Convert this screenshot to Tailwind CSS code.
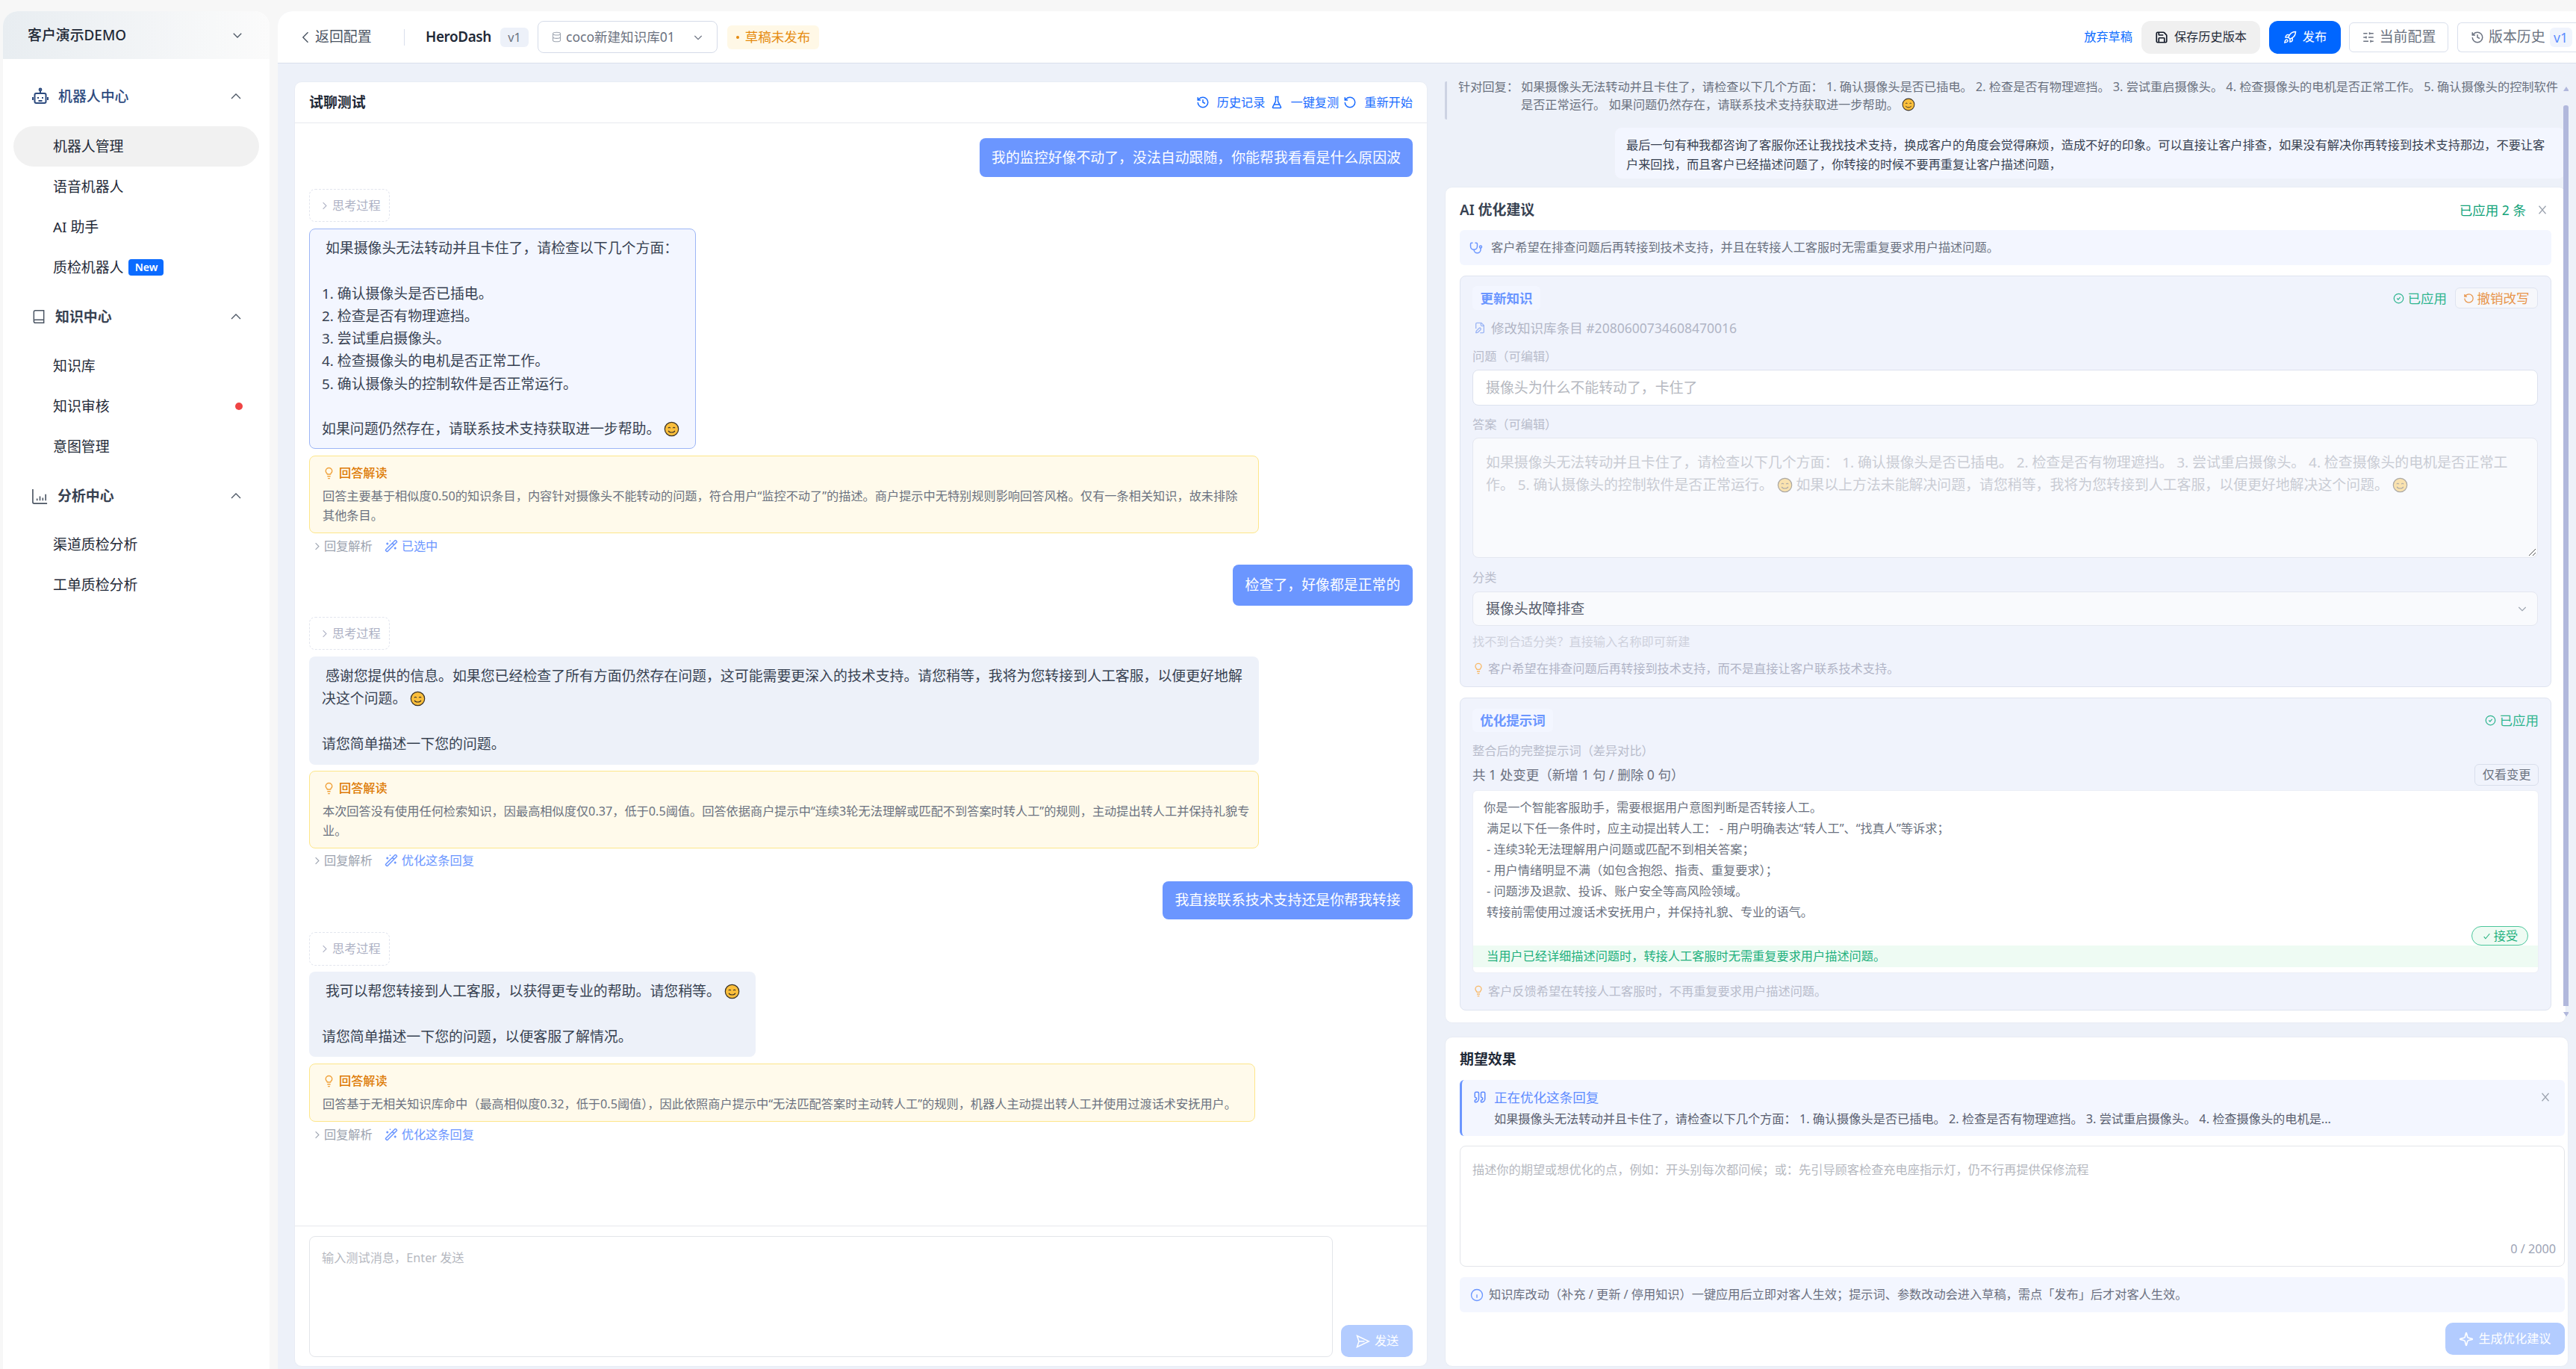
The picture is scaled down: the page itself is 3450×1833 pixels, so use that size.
<!DOCTYPE html>
<html lang="zh-CN">
<head>
    <meta charset="UTF-8">
    <title>HeroDash 调优</title>
    <script src="https://cdn.jsdelivr.net/npm/@tailwindcss/browser@4"></script>
</head>
<body class="bg-[#f7f7f7] w-[3450px] h-[1833px] overflow-hidden font-['Noto_Sans','Noto_Sans_CJK_SC',sans-serif] text-[#1f2937]">

<!-- icon sprite -->
<svg class="hidden">
    <defs>
        <symbol id="i-down" viewBox="0 0 24 24" fill="none" stroke="currentColor" stroke-width="1.7"><path d="m5 9 7 7 7-7"/></symbol>
        <symbol id="i-up" viewBox="0 0 24 24" fill="none" stroke="currentColor" stroke-width="1.7"><path d="m4 16 8-8 8 8"/></symbol>
        <symbol id="i-left" viewBox="0 0 24 24" fill="none" stroke="currentColor" stroke-width="1.7"><path d="m15 4-8 8 8 8"/></symbol>
        <symbol id="i-right" viewBox="0 0 24 24" fill="none" stroke="currentColor" stroke-width="1.7"><path d="m9 5 7 7-7 7"/></symbol>
        <symbol id="i-x" viewBox="0 0 24 24" fill="none" stroke="currentColor" stroke-width="1.7"><path d="M6 5l12 14M18 5 6 19"/></symbol>
        <symbol id="i-bot" viewBox="0 0 24 24" fill="none" stroke="currentColor" stroke-width="2"><circle cx="12" cy="3" r="1.4"/><path d="M12 4.500V8"/><rect x="4.500" y="8" width="15" height="13" rx="2"/><path d="M2 13v4M22 13v4M9 13v2M15 13v2M9.500 18h5"/></symbol>
        <symbol id="i-book" viewBox="0 0 24 24" fill="none" stroke="currentColor" stroke-width="1.8"><path d="M4 19.500v-15A2.500 2.500 0 0 1 6.500 2H20v20H6.500a2.500 2.500 0 0 1-2.500-2.500zM4 18.500A2 2 0 0 1 6 17h14"/></symbol>
        <symbol id="i-chart" viewBox="0 0 24 24" fill="none" stroke="currentColor" stroke-width="1.7"><path d="M2 2v18a2 2 0 0 0 2 2h18M8 18v-3M12 18v-6M16 18v-4M20 18V9"/></symbol>
        <symbol id="i-db" viewBox="0 0 24 24" fill="none" stroke="currentColor" stroke-width="1.7"><ellipse cx="12" cy="5" rx="8" ry="3"/><path d="M4 5v14c0 1.700 3.600 3 8 3s8-1.300 8-3V5M4 12c0 1.700 3.600 3 8 3s8-1.300 8-3"/></symbol>
        <symbol id="i-history" viewBox="0 0 24 24" fill="none" stroke="currentColor" stroke-width="2"><path d="M3 12a9 9 0 1 0 9-9 9.750 9.750 0 0 0-6.740 2.740L3 8M3 3v5h5M12 7v5l4 2"/></symbol>
        <symbol id="i-undo" viewBox="0 0 24 24" fill="none" stroke="currentColor" stroke-width="2"><path d="M3 12a9 9 0 1 0 9-9 9.750 9.750 0 0 0-6.740 2.740L3 8M3 3v5h5"/></symbol>
        <symbol id="i-flask" viewBox="0 0 24 24" fill="none" stroke="currentColor" stroke-width="2"><path d="M10 2v7.500a2 2 0 0 1-.2.900L4.700 20.500a1 1 0 0 0 .9 1.500h12.800a1 1 0 0 0 .9-1.500l-5.100-10.100a2 2 0 0 1-.2-.9V2M8.500 2h7M7 16h10"/></symbol>
        <symbol id="i-save" viewBox="0 0 24 24" fill="none" stroke="currentColor" stroke-width="2.200"><path d="M15.200 3a2 2 0 0 1 1.400.6l3.800 3.800a2 2 0 0 1 .6 1.400V19a2 2 0 0 1-2 2H5a2 2 0 0 1-2-2V5a2 2 0 0 1 2-2zM17 21v-7a1 1 0 0 0-1-1H8a1 1 0 0 0-1 1v7M7 3v4a1 1 0 0 0 1 1h7"/></symbol>
        <symbol id="i-rocket" viewBox="0 0 24 24" fill="none" stroke="currentColor" stroke-width="2"><path d="M4.500 16.500c-1.500 1.260-2 5-2 5s3.740-.5 5-2c.71-.84.7-2.130-.09-2.910a2.180 2.180 0 0 0-2.910-.09zM12 15l-3-3a22 22 0 0 1 2-3.950A12.880 12.880 0 0 1 22 2c0 2.720-.78 7.500-6 11a22.350 22.350 0 0 1-4 2zM9 12H4s.55-3.030 2-4c1.620-1.080 5 0 5 0M12 15v5s3.030-.55 4-2c1.080-1.620 0-5 0-5"/></symbol>
        <symbol id="i-sliders" viewBox="0 0 24 24" fill="none" stroke="currentColor" stroke-width="2"><path d="M21 5h-7M10 5H3M21 12h-9M8 12H3M21 19h-5M12 19H3M14 3v4M8 10v4M16 17v4"/></symbol>
        <symbol id="i-bulb" viewBox="0 0 24 24" fill="none" stroke="currentColor" stroke-width="2"><path d="M15 14c.2-1 .7-1.700 1.500-2.500 1-.9 1.500-2.200 1.500-3.500A6 6 0 0 0 6 8c0 1 .2 2.200 1.500 3.500.7.7 1.300 1.500 1.500 2.500zM9 18h6M10 22h4"/></symbol>
        <symbol id="i-wand" viewBox="0 0 24 24" fill="none" stroke="currentColor" stroke-width="2"><path d="m21.640 3.640-1.280-1.280a1.210 1.210 0 0 0-1.720 0L2.360 18.640a1.210 1.210 0 0 0 0 1.720l1.280 1.280a1.200 1.200 0 0 0 1.720 0L21.640 5.360a1.200 1.200 0 0 0 0-1.720M14 7l3 3M5 6v4M19 14v4M10 2v2M7 8H3M21 16h-4M11 3H9"/></symbol>
        <symbol id="i-steth" viewBox="0 0 24 24" fill="none" stroke="currentColor" stroke-width="2"><path d="M11 2v2M5 2v2M5 3H4a2 2 0 0 0-2 2v4a6 6 0 0 0 12 0V5a2 2 0 0 0-2-2h-1M8 15a6 6 0 0 0 12 0v-3"/><circle cx="20" cy="10" r="2"/></symbol>
        <symbol id="i-filepen" viewBox="0 0 24 24" fill="none" stroke="currentColor" stroke-width="2"><path d="M12.500 22H18a2 2 0 0 0 2-2V7l-5-5H6a2 2 0 0 0-2 2v9.500M14 2v4a2 2 0 0 0 2 2h4M13.380 15.630a1 1 0 1 0-3-3l-5 5a2 2 0 0 0-.5.85l-.84 2.870a.5.5 0 0 0 .62.62l2.870-.84a2 2 0 0 0 .85-.5z"/></symbol>
        <symbol id="i-check" viewBox="0 0 24 24" fill="none" stroke="currentColor" stroke-width="2"><circle cx="12" cy="12" r="10"/><path d="m8.500 12 2.500 2.500 4.500-5"/></symbol>
        <symbol id="i-tick" viewBox="0 0 24 24" fill="none" stroke="currentColor" stroke-width="2"><path d="m5 13 4 5L19 6"/></symbol>
        <symbol id="i-send" viewBox="0 0 24 24" fill="none" stroke="currentColor" stroke-width="1.800"><path d="M3 3l19 9-19 9 3-9zM6 12h9"/></symbol>
        <symbol id="i-info" viewBox="0 0 24 24" fill="none" stroke="currentColor" stroke-width="1.800"><circle cx="12" cy="12" r="10"/><path d="M12 17v-6M12 7.500h.01"/></symbol>
        <symbol id="i-quote" viewBox="0 0 24 24" fill="none" stroke="currentColor" stroke-width="2"><path d="M16 3a2 2 0 0 0-2 2v6a2 2 0 0 0 2 2 1 1 0 0 1 1 1v1a2 2 0 0 1-2 2 1 1 0 0 0-1 1v2a1 1 0 0 0 1 1 6 6 0 0 0 6-6V5a2 2 0 0 0-2-2zM5 3a2 2 0 0 0-2 2v6a2 2 0 0 0 2 2 1 1 0 0 1 1 1v1a2 2 0 0 1-2 2 1 1 0 0 0-1 1v2a1 1 0 0 0 1 1 6 6 0 0 0 6-6V5a2 2 0 0 0-2-2z"/></symbol>
        <symbol id="i-spark" viewBox="0 0 24 24" fill="none" stroke="currentColor" stroke-width="2"><path d="M9.940 15.500A2 2 0 0 0 8.500 14.060l-6.130-1.580a.5.5 0 0 1 0-.96L8.500 9.940A2 2 0 0 0 9.940 8.500l1.580-6.130a.5.5 0 0 1 .96 0l1.580 6.130a2 2 0 0 0 1.440 1.440l6.130 1.580a.5.5 0 0 1 0 .96l-6.130 1.580a2 2 0 0 0-1.440 1.440l-1.580 6.130a.5.5 0 0 1-.96 0z"/></symbol>
        <symbol id="i-smile" viewBox="0 0 24 24"><circle cx="12" cy="12" r="10.500" fill="#fbbf3c" stroke="#3a3226" stroke-width="1.400"/><path d="M6.800 10.500c.8-1.500 2.400-1.500 3.200 0M14 10.500c.8-1.500 2.400-1.500 3.200 0M7 14.500c1.500 3.600 8.500 3.600 10 0" fill="none" stroke="#3a3226" stroke-width="1.300"/></symbol>
    </defs>
</svg>

<div class="flex pt-[15px] pl-[4px] h-full">

    <!-- sidebar -->
    <aside class="w-[357px] shrink-0 bg-white rounded-t-[20px] h-[1818px] text-[18.9px]">
        <div class="h-[64px] rounded-t-[20px] bg-gradient-to-r from-[#e8edf1] to-[#fbfbfb] flex items-center justify-between pl-[33px] pr-[34px]">
            <span class="font-medium text-[#1f2937]">客户演示DEMO</span>
            <svg class="size-[18px] text-[#4b5563]"><use href="#i-down"/></svg>
        </div>

        <div class="mt-[30px] h-[40px] flex items-center pl-[38px] pr-[36px] font-medium text-[#2c4a7e]">
            <svg class="size-[24px] mr-[12px]"><use href="#i-bot"/></svg>
            <span>机器人中心</span>
            <svg class="size-[18px] ml-auto text-[#4b5563]"><use href="#i-up"/></svg>
        </div>
        <div class="mt-[20px] mx-[14px] h-[54px] rounded-full bg-[#f1f1f1] flex items-center pl-[53px]">机器人管理</div>
        <div class="h-[54px] flex items-center pl-[67px]">语音机器人</div>
        <div class="h-[54px] flex items-center pl-[67px]">AI 助手</div>
        <div class="h-[54px] flex items-center pl-[67px]">质检机器人<span class="ml-[7px] h-[22px] w-[47px] rounded-[4px] bg-[#0b6bff] text-white text-[14px] font-semibold leading-[22px] text-center">New</span></div>

        <div class="mt-[19px] h-[40px] flex items-center pl-[38px] pr-[36px] font-semibold text-[#374151]">
            <svg class="size-[20px] mr-[12px] text-[#4b5563]"><use href="#i-book"/></svg>
            <span>知识中心</span>
            <svg class="size-[18px] ml-auto text-[#4b5563]"><use href="#i-up"/></svg>
        </div>
        <div class="mt-[19px] h-[54px] flex items-center pl-[67px]">知识库</div>
        <div class="h-[54px] flex items-center pl-[67px] pr-[36px] justify-between">知识审核<span class="size-[10px] rounded-full bg-[#ef4444]"></span></div>
        <div class="h-[54px] flex items-center pl-[67px]">意图管理</div>

        <div class="mt-[19px] h-[40px] flex items-center pl-[38px] pr-[36px] font-semibold text-[#374151]">
            <svg class="size-[23px] mr-[12px] text-[#4b5563]"><use href="#i-chart"/></svg>
            <span>分析中心</span>
            <svg class="size-[18px] ml-auto text-[#4b5563]"><use href="#i-up"/></svg>
        </div>
        <div class="mt-[18px] h-[54px] flex items-center pl-[67px]">渠道质检分析</div>
        <div class="h-[54px] flex items-center pl-[67px]">工单质检分析</div>
    </aside>

    <!-- main -->
    <main class="ml-[11px] w-[3078px] h-[1818px] shrink-0 bg-[#edf1f9] rounded-tl-[20px] flex flex-col overflow-hidden">

        <!-- top bar -->
        <header class="h-[70px] shrink-0 bg-white border-b border-[#d9dfec] flex items-center pl-[28px] text-[18.9px] whitespace-nowrap">
            <svg class="size-[20px] text-[#4b5563]"><use href="#i-left"/></svg>
            <span class="ml-[2px] w-[76px] text-[#4b5563]">返回配置</span>
            <span class="ml-[43px] w-px h-[22px] bg-[#d9dfec]"></span>
            <span class="ml-[28px] w-[88px] font-semibold tracking-[-0.4px] text-[#1f2937]">HeroDash</span>
            <span class="ml-[12px] w-[38px] h-[26px] rounded-[6px] bg-[#edf1f9] text-[#6b7280] text-[16.2px] leading-[26px] text-center">v1</span>
            <div class="ml-[12px] w-[241px] h-[43px] rounded-[8px] border border-[#d5dbe8] flex items-center pl-[17px] pr-[17px] text-[17.55px] text-[#6b7280]">
                <svg class="size-[15px] mr-[5px] text-[#9ca3af]"><use href="#i-db"/></svg>
                <span>coco新建知识库01</span>
                <svg class="size-[16px] ml-auto"><use href="#i-down"/></svg>
            </div>
            <div class="ml-[13px] w-[123px] h-[32px] rounded-[6px] bg-[#fff8e6] flex items-center justify-center text-[#e58a0f] text-[17.55px]"><span class="size-[4px] rounded-full bg-[#e58a0f] mr-[8px]"></span>草稿未发布</div>

            <span class="ml-auto text-[16.2px] text-[#0b6bff]">放弃草稿</span>
            <div class="ml-[12px] w-[159px] h-[44px] rounded-[12px] bg-[#f0f0f0] flex items-center justify-center text-[16.2px] text-[#1f2937]">
                <svg class="size-[18px] mr-[8px] text-[#111827]"><use href="#i-save"/></svg>保存历史版本
            </div>
            <div class="ml-[12px] w-[96px] h-[44px] rounded-[12px] bg-[#0066ff] flex items-center justify-center text-[16.2px] text-white">
                <svg class="size-[18px] mr-[8px]"><use href="#i-rocket"/></svg>发布
            </div>
            <div class="ml-[11px] w-[133px] h-[40px] rounded-[6px] border border-[#d9dfec] flex items-center justify-center text-[#6b7280]">
                <svg class="size-[18px] mr-[6px]"><use href="#i-sliders"/></svg>当前配置
            </div>
            <div class="ml-[12px] w-[159px] shrink-0 h-[40px] rounded-l-[6px] border border-r-0 border-[#d9dfec] flex items-center pl-[17px] text-[#6b7280]">
                <svg class="size-[18px] mr-[6px]"><use href="#i-history"/></svg>版本历史
                <span class="ml-[6px] w-[30px] h-[26px] rounded-[6px] bg-[#f0f4fd] text-[#5b8cff] text-[17.55px] leading-[26px] text-center">v1</span>
            </div>
        </header>

        <div class="flex pt-[24px] pl-[22px] flex-1">

            <!-- chat panel -->
            <section class="w-[1518px] h-[1721px] shrink-0 bg-white rounded-[10px] flex flex-col border border-[#e8ecf4]">
                <div class="h-[55px] shrink-0 border-b border-[#e7e9ee] flex items-center px-[19px]">
                    <span class="text-[18.9px] font-semibold text-[#1f2937]">试聊测试</span>
                    <div class="ml-auto flex items-center text-[16.2px] text-[#1a6cff]">
                        <svg class="size-[18px] mr-[10px]"><use href="#i-history"/></svg>历史记录
                        <svg class="size-[18px] ml-[6px] mr-[10px]"><use href="#i-flask"/></svg>一键复测
                        <svg class="size-[18px] ml-[6px] mr-[10px]"><use href="#i-undo"/></svg>重新开始
                    </div>
                </div>

                <div class="h-[1476px] shrink-0 flex flex-col items-start px-[19px] pt-[20px] overflow-hidden">
                    <div class="self-end h-[52px] w-[580px] rounded-[8px] bg-[#6b96ff] text-white text-[18.9px] flex items-center justify-center whitespace-nowrap">我的监控好像不动了，没法自动跟随，你能帮我看看是什么原因波</div>

                    <div class="mt-[16px] w-[108px] h-[44px] rounded-[8px] border border-dashed border-[#e2e5ee] flex items-center pl-[12px] text-[16.2px] text-[#adb1c4]">
                        <svg class="size-[15px] mr-[3px]"><use href="#i-right"/></svg>思考过程
                    </div>
                    <div class="mt-[9px] w-[518px] h-[295px] rounded-[8px] bg-[#f3f6ff] border-[1.5px] border-[#9db6f5] px-[16px] py-[10px] text-[18.9px] leading-[30.25px] text-[#374151] whitespace-pre"> 如果摄像头无法转动并且卡住了，请检查以下几个方面：

1. 确认摄像头是否已插电。
2. 检查是否有物理遮挡。
3. 尝试重启摄像头。
4. 检查摄像头的电机是否正常工作。
5. 确认摄像头的控制软件是否正常运行。

如果问题仍然存在，请联系技术支持获取进一步帮助。 <svg class="inline size-[21px] align-[-4px]"><use href="#i-smile"/></svg></div>
                    <div class="mt-[9px] w-[1272px] h-[104px] rounded-[8px] bg-[#fffaeb] border border-[#fde68a] px-[17px] pt-[10px]">
                        <div class="flex items-center text-[16.2px] font-medium text-[#dd7a06] leading-[24px]">
                            <svg class="size-[17px] mr-[5px] text-[#f0a23c]"><use href="#i-bulb"/></svg>回答解读
                        </div>
                        <p class="mt-[6px] text-[16.2px] leading-[26px] text-[#6b7280]">回答主要基于相似度0.50的知识条目，内容针对摄像头不能转动的问题，符合用户“监控不动了”的描述。商户提示中无特别规则影响回答风格。仅有一条相关知识，故未排除其他条目。</p>
                    </div>
                    <div class="mt-[5px] h-[24px] flex items-center pl-[3px] text-[16.2px] text-[#9ca3af]">
                        <svg class="size-[15px] mr-[2px]"><use href="#i-right"/></svg>回复解析
                        <svg class="size-[18px] ml-[16px] mr-[5px] text-[#6b96ff]"><use href="#i-wand"/></svg><span class="text-[#6b96ff]">已选中</span>
                    </div>

                    <div class="mt-[13px] self-end h-[55px] w-[241px] rounded-[8px] bg-[#6b96ff] text-white text-[18.9px] flex items-center justify-center whitespace-nowrap">检查了，好像都是正常的</div>

                    <div class="mt-[15px] w-[108px] h-[44px] rounded-[8px] border border-dashed border-[#e2e5ee] flex items-center pl-[12px] text-[16.2px] text-[#adb1c4]">
                        <svg class="size-[15px] mr-[3px]"><use href="#i-right"/></svg>思考过程
                    </div>
                    <div class="mt-[9px] w-[1272px] h-[145px] rounded-[8px] bg-[#edf1f9] px-[17px] py-[11px] text-[18.9px] leading-[30.25px] text-[#374151] whitespace-pre-wrap"> 感谢您提供的信息。如果您已经检查了所有方面仍然存在问题，这可能需要更深入的技术支持。请您稍等，我将为您转接到人工客服，以便更好地解决这个问题。 <svg class="inline size-[21px] align-[-4px]"><use href="#i-smile"/></svg>

请您简单描述一下您的问题。</div>
                    <div class="mt-[8px] w-[1272px] h-[104px] rounded-[8px] bg-[#fffaeb] border border-[#fde68a] px-[17px] pt-[10px]">
                        <div class="flex items-center text-[16.2px] font-medium text-[#dd7a06] leading-[24px]">
                            <svg class="size-[17px] mr-[5px] text-[#f0a23c]"><use href="#i-bulb"/></svg>回答解读
                        </div>
                        <p class="mt-[6px] -mr-[10px] text-[16.2px] leading-[26px] text-[#6b7280]">本次回答没有使用任何检索知识，因最高相似度仅0.37，低于0.5阈值。回答依据商户提示中“连续3轮无法理解或匹配不到答案时转人工”的规则，主动提出转人工并保持礼貌专业。</p>
                    </div>
                    <div class="mt-[4px] h-[24px] flex items-center pl-[3px] text-[16.2px] text-[#9ca3af]">
                        <svg class="size-[15px] mr-[2px]"><use href="#i-right"/></svg>回复解析
                        <svg class="size-[18px] ml-[16px] mr-[5px] text-[#6b96ff]"><use href="#i-wand"/></svg><span class="text-[#6b96ff]">优化这条回复</span>
                    </div>

                    <div class="mt-[16px] self-end h-[51px] w-[335px] rounded-[8px] bg-[#6b96ff] text-white text-[18.9px] flex items-center justify-center whitespace-nowrap">我直接联系技术支持还是你帮我转接</div>

                    <div class="mt-[17px] w-[108px] h-[45px] rounded-[8px] border border-dashed border-[#e2e5ee] flex items-center pl-[12px] text-[16.2px] text-[#adb1c4]">
                        <svg class="size-[15px] mr-[3px]"><use href="#i-right"/></svg>思考过程
                    </div>
                    <div class="mt-[8px] w-[598px] h-[114px] rounded-[8px] bg-[#edf1f9] px-[17px] py-[11px] text-[18.9px] leading-[30.25px] text-[#374151] whitespace-pre"> 我可以帮您转接到人工客服，以获得更专业的帮助。请您稍等。 <svg class="inline size-[21px] align-[-4px]"><use href="#i-smile"/></svg>

请您简单描述一下您的问题，以便客服了解情况。</div>
                    <div class="mt-[9px] w-[1267px] h-[78px] rounded-[8px] bg-[#fffaeb] border border-[#fde68a] px-[17px] pt-[10px]">
                        <div class="flex items-center text-[16.2px] font-medium text-[#dd7a06] leading-[24px]">
                            <svg class="size-[17px] mr-[5px] text-[#f0a23c]"><use href="#i-bulb"/></svg>回答解读
                        </div>
                        <p class="mt-[6px] text-[16.2px] leading-[26px] text-[#6b7280] whitespace-nowrap">回答基于无相关知识库命中（最高相似度0.32，低于0.5阈值），因此依照商户提示中“无法匹配答案时主动转人工”的规则，机器人主动提出转人工并使用过渡话术安抚用户。</p>
                    </div>
                    <div class="mt-[5px] h-[24px] flex items-center pl-[3px] text-[16.2px] text-[#9ca3af]">
                        <svg class="size-[15px] mr-[2px]"><use href="#i-right"/></svg>回复解析
                        <svg class="size-[18px] ml-[16px] mr-[5px] text-[#6b96ff]"><use href="#i-wand"/></svg><span class="text-[#6b96ff]">优化这条回复</span>
                    </div>
                </div>

                <div class="border-t border-[#e7e9ee] flex items-end gap-[11px] px-[19px] pt-[13px]">
                    <div class="w-[1373px] h-[162px] rounded-[8px] border border-[#e3e5ea] px-[16px] pt-[15px] text-[16.2px] leading-[26px] text-[#b5b8c0]">输入测试消息，Enter 发送</div>
                    <div class="w-[96px] h-[43px] rounded-[10px] bg-[#b3ccff] text-white text-[16.2px] flex items-center justify-center">
                        <svg class="size-[20px] mr-[6px]"><use href="#i-send"/></svg>发送
                    </div>
                </div>
            </section>

            <!-- right column -->
            <div class="ml-[23px] w-[1505px] shrink-0 flex flex-col">

                <div class="relative h-[1261px] overflow-hidden">
                    <!-- scrollbar -->
                    <div class="absolute right-0 top-0 w-[7px] h-full">
                        <div class="absolute top-[7px] left-0 w-0 h-0 border-x-[4px] border-x-transparent border-b-[6px] border-b-[#b1b8dc]"></div>
                        <div class="absolute top-[32px] bottom-[23px] left-0 w-full bg-[#b1b8dc] rounded-t-[3px]"></div>
                        <div class="absolute bottom-[9px] left-0 w-0 h-0 border-x-[4px] border-x-transparent border-t-[6px] border-t-[#b1b8dc]"></div>
                    </div>

                    <div class="h-[51px] border-l-[3px] border-[#cdd3e3] rounded-[2px] pl-[15px] flex overflow-hidden">
                        <span class="w-[84px] shrink-0 -mt-[5px] text-[16.2px] leading-[24px] text-[#6b7280]">针对回复：</span>
                        <p class="w-[1395px] -mt-[5px] text-[16.2px] leading-[24px] text-[#6b7280]">如果摄像头无法转动并且卡住了，请检查以下几个方面： 1. 确认摄像头是否已插电。 2. 检查是否有物理遮挡。 3. 尝试重启摄像头。 4. 检查摄像头的电机是否正常工作。 5. 确认摄像头的控制软件是否正常运行。 如果问题仍然存在，请联系技术支持获取进一步帮助。 <svg class="inline size-[18px] align-[-3px]"><use href="#i-smile"/></svg></p>
                    </div>

                    <div class="mt-[10px] ml-[227px] w-[1274px] h-[70px] rounded-[10px] bg-[#f3f6ff] border border-[#eef1f9] px-[15px] pt-[10px] text-[16.2px] leading-[26px] text-[#374151]">最后一句有种我都咨询了客服你还让我找技术支持，换成客户的角度会觉得麻烦，造成不好的印象。可以直接让客户排查，如果没有解决你再转接到技术支持那边，不要让客户来回找，而且客户已经描述问题了，你转接的时候不要再重复让客户描述问题，</div>

                    <!-- AI suggestions -->
                    <div class="mt-[10px] w-[1502px] h-[1120px] bg-white rounded-[10px] border border-[#e8ecf4] px-[19px]">
                        <div class="h-[57px] pt-[19px] flex items-start justify-between pr-[3px]">
                            <span class="text-[18.9px] leading-[22px] font-semibold text-[#374151]">AI 优化建议</span>
                            <div class="flex items-center text-[17.55px] leading-[22px] text-[#12a37a]">已应用 2 条<svg class="size-[18px] ml-[13px] text-[#9ca3af]"><use href="#i-x"/></svg></div>
                        </div>

                        <div class="h-[47px] rounded-[6px] bg-[#f3f6ff] flex items-center pl-[13px] text-[16.2px] text-[#6b7280]">
                            <svg class="size-[18px] mr-[11px] text-[#6b96ff]"><use href="#i-steth"/></svg>客户希望在排查问题后再转接到技术支持，并且在转接人工客服时无需重复要求用户描述问题。
                        </div>

                        <!-- knowledge update -->
                        <div class="mt-[14px] h-[551px] rounded-[8px] bg-[#f0f3fc] border border-[#dfe4f0] pl-[16px] pr-[17px] pt-[13px]">
                            <div class="flex items-center justify-between">
                                <span class="w-[91px] h-[32px] rounded-[6px] bg-[#f3f6ff] text-[#6b96ff] text-[17.55px] font-bold leading-[32px] text-center">更新知识</span>
                                <div class="flex items-center text-[17.55px]">
                                    <span class="flex items-center text-[#2fb58f]"><svg class="size-[15px] mr-[4px]"><use href="#i-check"/></svg>已应用</span>
                                    <span class="ml-[11px] w-[111px] h-[28px] rounded-[6px] border border-[#dfe4f0] bg-[#f6f7fb] flex items-center justify-center text-[#e8954a]"><svg class="size-[15px] mr-[3px]"><use href="#i-undo"/></svg>撤销改写</span>
                                </div>
                            </div>
                            <div class="mt-[12px] h-[24px] flex items-center text-[17.55px] text-[#b0b5c5] pl-[2px]">
                                <svg class="size-[16px] mr-[7px] text-[#9db6f5]"><use href="#i-filepen"/></svg>修改知识库条目 #2080600734608470016
                            </div>
                            <div class="mt-[14px] h-[24px] leading-[24px] text-[16.2px] text-[#b8bccb]">问题（可编辑）</div>
                            <div class="mt-[6px] h-[48px] rounded-[8px] bg-white border border-[#dde2ee] flex items-center pl-[17px] text-[18.9px] text-[#b5b8c0]">摄像头为什么不能转动了，卡住了</div>
                            <div class="mt-[13px] h-[24px] leading-[24px] text-[16.2px] text-[#b8bccb]">答案（可编辑）</div>
                            <div class="relative mt-[6px] h-[161px] rounded-[8px] bg-[#f9fafd] border border-[#e4e7f0] px-[17px] pt-[17px] text-[18.9px] leading-[30.25px] text-[#c9ccd4]">
                                <p>如果摄像头无法转动并且卡住了，请检查以下几个方面： 1. 确认摄像头是否已插电。 2. 检查是否有物理遮挡。 3. 尝试重启摄像头。 4. 检查摄像头的电机是否正常工作。 5. 确认摄像头的控制软件是否正常运行。 <svg class="inline size-[21px] align-[-4px] opacity-40"><use href="#i-smile"/></svg> 如果以上方法未能解决问题，请您稍等，我将为您转接到人工客服，以便更好地解决这个问题。 <svg class="inline size-[21px] align-[-4px] opacity-40"><use href="#i-smile"/></svg></p>
                                <svg class="absolute right-[1px] bottom-[1px] size-[12px] text-[#555]" viewBox="0 0 12 12" fill="none" stroke="currentColor"><path d="M11 2 2 11M11 7l-4 4"/></svg>
                            </div>
                            <div class="mt-[14px] h-[24px] leading-[24px] text-[16.2px] text-[#b8bccb]">分类</div>
                            <div class="mt-[7px] h-[46px] rounded-[8px] bg-[#f9fafd] border border-[#e4e7f0] flex items-center justify-between pl-[17px] pr-[12px] text-[18.9px] text-[#555a6b]">摄像头故障排查<svg class="size-[16px] text-[#9ca3af]"><use href="#i-down"/></svg></div>
                            <div class="mt-[9px] h-[24px] leading-[24px] text-[16.2px] text-[#ced1dc]">找不到合适分类？直接输入名称即可新建</div>
                            <div class="mt-[12px] h-[24px] flex items-center text-[16.2px] text-[#b0b4c6]">
                                <svg class="size-[16px] mr-[5px] text-[#f8b968]"><use href="#i-bulb"/></svg>客户希望在排查问题后再转接到技术支持，而不是直接让客户联系技术支持。
                            </div>
                        </div>

                        <!-- prompt update -->
                        <div class="mt-[14px] h-[419px] rounded-[8px] bg-[#f0f3fc] border border-[#dfe4f0] pl-[16px] pr-[16px] pt-[14px]">
                            <div class="flex items-center justify-between">
                                <span class="w-[108px] h-[31px] rounded-[6px] bg-[#f3f6ff] text-[#6b96ff] text-[17.55px] font-bold leading-[31px] text-center">优化提示词</span>
                                <span class="flex items-center text-[17.55px] text-[#2fb58f]"><svg class="size-[15px] mr-[4px]"><use href="#i-check"/></svg>已应用</span>
                            </div>
                            <div class="mt-[13px] h-[24px] leading-[24px] text-[16.2px] text-[#b8bccb]">整合后的完整提示词（差异对比）</div>
                            <div class="mt-[6px] h-[29px] flex items-center justify-between text-[17.55px] text-[#6b7080]">
                                <span>共 1 处变更（新增 1 句 / 删除 0 句）</span>
                                <span class="w-[86px] h-[29px] rounded-[6px] border border-[#d9dfec] text-[16.2px] leading-[27px] text-center text-[#6b7280]">仅看变更</span>
                            </div>
                            <div class="relative mt-[6px] h-[245px] rounded-[6px] bg-white border border-[#eceff6] pt-[8px] text-[16.2px] leading-[28px] text-[#6b7280]">
                                <div class="pl-[14px]">你是一个智能客服助手，需要根据用户意图判断是否转接人工。</div>
                                <div class="pl-[18px]">满足以下任一条件时，应主动提出转人工： - 用户明确表达“转人工”、“找真人”等诉求；</div>
                                <div class="pl-[18px]">- 连续3轮无法理解用户问题或匹配不到相关答案；</div>
                                <div class="pl-[18px]">- 用户情绪明显不满（如包含抱怨、指责、重复要求）；</div>
                                <div class="pl-[18px]">- 问题涉及退款、投诉、账户安全等高风险领域。</div>
                                <div class="pl-[18px]">转接前需使用过渡话术安抚用户，并保持礼貌、专业的语气。</div>
                                <div class="mt-[31px] h-[29px] leading-[29px] bg-[#eefbf3] pl-[18px] text-[#22b07d]">当用户已经详细描述问题时，转接人工客服时无需重复要求用户描述问题。</div>
                                <span class="absolute top-[181px] right-[13px] w-[76px] h-[26px] rounded-full bg-[#eefbf3] border border-[#4cc79c] text-[#22b07d] text-[16.2px] flex items-center justify-center"><svg class="size-[13px] mr-[3px]"><use href="#i-tick"/></svg>接受</span>
                            </div>
                            <div class="mt-[12px] h-[24px] flex items-center text-[16.2px] text-[#b8bccb]">
                                <svg class="size-[16px] mr-[5px] text-[#f8b968]"><use href="#i-bulb"/></svg>客户反馈希望在转接人工客服时，不再重复要求用户描述问题。
                            </div>
                        </div>
                    </div>
                </div>

                <!-- expected outcome -->
                <div class="mt-[18px] h-[442px] bg-white rounded-[10px] border border-[#e8ecf4] pl-[19px] pr-[4px]">
                    <div class="h-[57px] pt-[18px] text-[18.9px] leading-[22px] font-semibold text-[#1f2937]">期望效果</div>
                    <div class="h-[75px] rounded-[6px] bg-[#f3f6ff] border-l-[3px] border-[#6b96ff] pl-[15px] pr-[17px] pt-[10px] relative">
                        <div class="flex items-center h-[26px] text-[17.55px] text-[#5f8cff]">
                            <svg class="size-[18px] mr-[10px]"><use href="#i-quote"/></svg>正在优化这条回复
                            <svg class="size-[18px] ml-auto text-[#9ca3af]"><use href="#i-x"/></svg>
                        </div>
                        <div class="mt-[4px] pl-[28px] text-[16.2px] leading-[24px] text-[#5a6070]">如果摄像头无法转动并且卡住了，请检查以下几个方面： 1. 确认摄像头是否已插电。 2. 检查是否有物理遮挡。 3. 尝试重启摄像头。 4. 检查摄像头的电机是...</div>
                    </div>
                    <div class="relative mt-[13px] h-[162px] rounded-[8px] border border-[#e3e5ea] px-[16px] pt-[18px] text-[16.2px] leading-[26px] text-[#b5b8c0]">
                        描述你的期望或想优化的点，例如：开头别每次都问候；或：先引导顾客检查充电座指示灯，仍不行再提供保修流程
                        <span class="absolute right-[11px] bottom-[10px] text-[#9ca3b5]">0 / 2000</span>
                    </div>
                    <div class="mt-[14px] h-[47px] rounded-[6px] bg-[#f3f6ff] flex items-center pl-[14px] text-[16.2px] text-[#6b7080]">
                        <svg class="size-[18px] mr-[7px] text-[#6b96ff]"><use href="#i-info"/></svg>知识库改动（补充 / 更新 / 停用知识）一键应用后立即对客人生效；提示词、参数改动会进入草稿，需点「发布」后才对客人生效。
                    </div>
                    <div class="mt-[14px] ml-auto w-[160px] h-[43px] rounded-[10px] bg-[#b3ccff] text-white text-[16.2px] flex items-center justify-center">
                        <svg class="size-[20px] mr-[6px]"><use href="#i-spark"/></svg>生成优化建议
                    </div>
                </div>
            </div>
        </div>
    </main>
</div>
</body>
</html>
